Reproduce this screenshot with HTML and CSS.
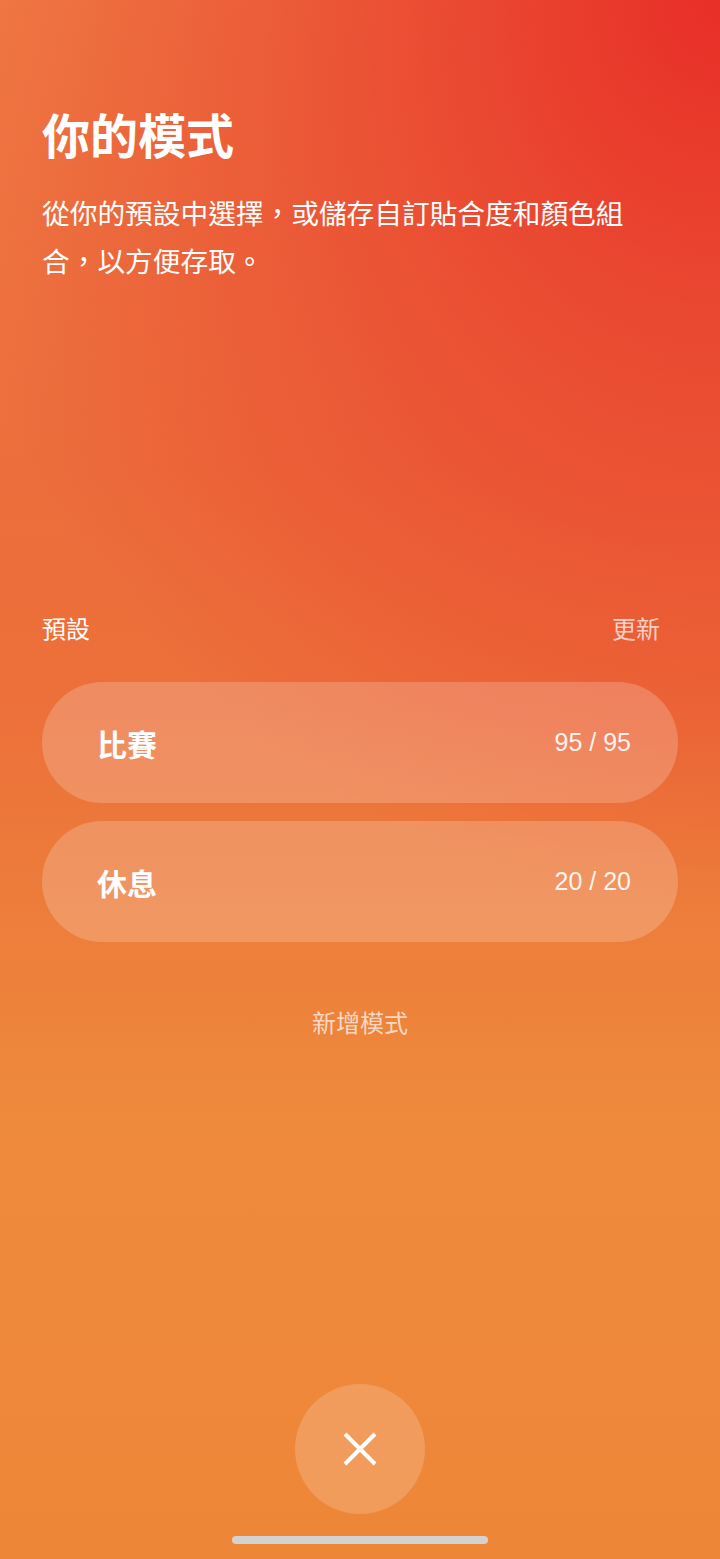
FILE: index.html
```html
<!DOCTYPE html>
<html lang="zh-Hant">
<head>
  <meta charset="UTF-8" />
  <title>你的模式</title>
  <link rel="stylesheet" href="styles.css">
</head>
<body>

  <div class="screen">

    <!-- Kopfbereich -->
    <h1 class="title">你的模式</h1>
    <p class="intro">從你的預設中選擇，或儲存自訂貼合度和顏色組合，以方便存取。</p>

    <!-- Voreinstellungen -->
    <div class="preset-head">
      <span class="preset-label">預設</span>
      <span class="preset-update">更新</span>
    </div>

    <div class="preset-list">
      <div class="preset preset-first">
        <span class="preset-name">比賽</span>
        <span class="preset-value">95 / 95</span>
      </div>
      <div class="preset preset-second">
        <span class="preset-name">休息</span>
        <span class="preset-value">20 / 20</span>
      </div>
    </div>

    <div class="add-mode">新增模式</div>

    <!-- Schließen -->
    <button class="close-btn" aria-label="關閉">
      <svg width="34" height="34" viewBox="0 0 34 34">
        <path d="M2 2 L32 32 M32 2 L2 32" stroke="#fff" stroke-width="4" stroke-linecap="butt" fill="none"/>
      </svg>
    </button>

    <div class="home-bar"></div>
  </div>

</body>
</html>
```

FILE: styles.css
```css
html, body {
  margin: 0;
  padding: 0;
}
body {
  font-family: "Liberation Sans", "Noto Sans CJK TC", sans-serif;
  color: #fff;
  background: #ee8438;
}
.screen {
  box-sizing: border-box;
  height: 1559px;
  padding: 110px 42px 15px;
  display: flex;
  flex-direction: column;
  background:
    radial-gradient(ellipse 900px 1000px at 100% 0%, rgba(232, 46, 40, 1) 0%, rgba(232, 54, 42, 0.6) 40%, rgba(232, 60, 44, 0) 90%),
    linear-gradient(180deg, #ef8046 0%, #ec6e3c 30%, #ec703a 45%, #ee8a3c 72%, #ee8638 100%);
}
.title {
  margin: 0;
  font-size: 48px;
  line-height: 56px;
  font-weight: bold;
}
.intro {
  margin: 25px 0 0;
  max-width: 600px;
  font-size: 27.7px;
  line-height: 48px;
}
.preset-head {
  margin-top: 327px;
  padding-right: 18px;
  display: flex;
  justify-content: space-between;
  font-size: 24px;
  line-height: 32px;
}
.preset-update {
  color: rgba(255, 255, 255, 0.72);
}
.preset-list {
  margin-top: 36px;
  display: flex;
  flex-direction: column;
  gap: 18px;
}
.preset {
  height: 121px;
  border-radius: 61px;
  padding: 0 47px 0 55px;
  display: flex;
  align-items: center;
  justify-content: space-between;
  background: rgba(255, 255, 255, 0.2);
}
.preset-name {
  font-size: 30px;
  font-weight: bold;
}
.preset-value {
  font-size: 25px;
  color: rgba(255, 255, 255, 0.92);
}
.add-mode {
  margin-top: 66px;
  text-align: center;
  font-size: 24px;
  line-height: 32px;
  color: rgba(255, 255, 255, 0.7);
}
.close-btn {
  margin: auto auto 0;
  width: 130px;
  height: 130px;
  border: none;
  border-radius: 50%;
  background: rgba(255, 255, 255, 0.18);
  display: flex;
  align-items: center;
  justify-content: center;
  padding: 0;
  cursor: pointer;
}
.home-bar {
  margin: 22px auto 0;
  width: 256px;
  height: 8px;
  border-radius: 4px;
  background: #d2d2d2;
}
```
